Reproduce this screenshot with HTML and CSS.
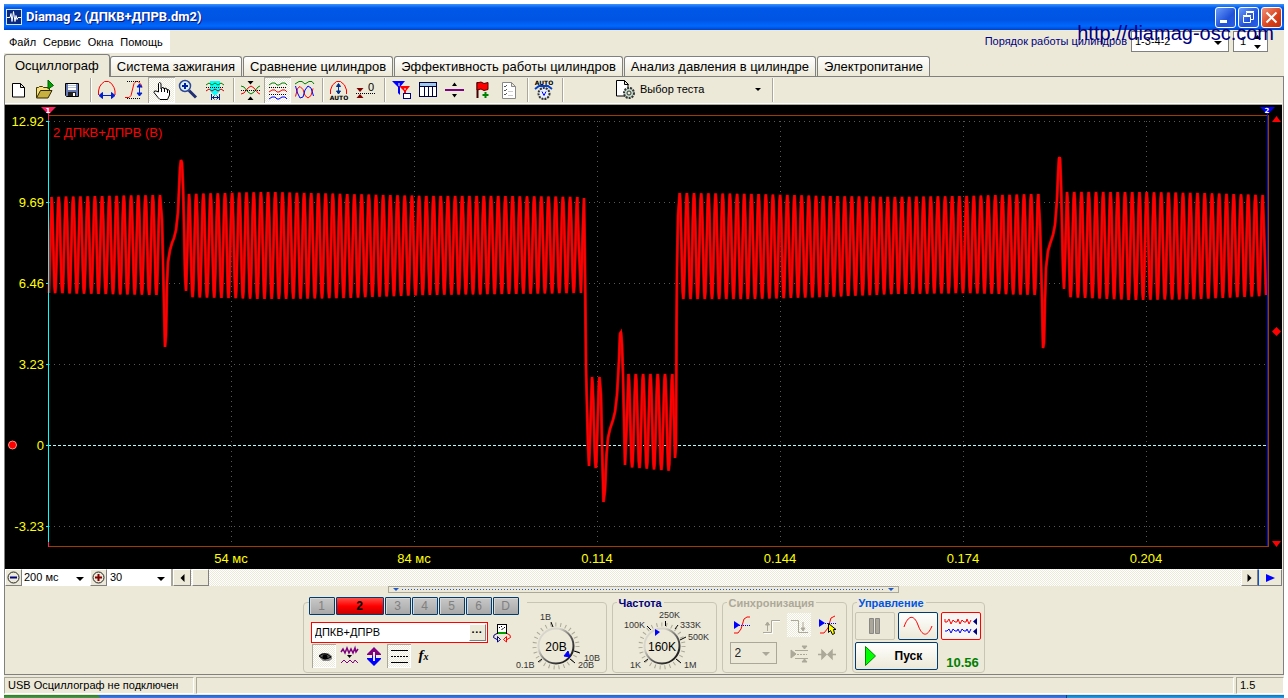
FILE: index.html
```html
<!DOCTYPE html>
<html lang="ru">
<head>
<meta charset="utf-8">
<title>Diamag 2</title>
<link rel="stylesheet" href="styles.css">
</head>
<body>
<div class="window">
  <header class="titlebar">
    <svg class="app-icon" width="16" height="16" viewBox="0 0 16 16"><rect width="16" height="16" fill="#d8e4f8"/><rect x="1" y="1" width="14" height="14" fill="#0a2a80"/><path d="M1 8.500h3l1-4 1 8 1.500-10 1.500 10 1-6 1 4 1-2h3" fill="none" stroke="#fff"/></svg>
    <h1 class="title">Diamag 2 (ДПКВ+ДПРВ.dm2)</h1>
    <div class="win-buttons">
      <button class="win-btn" aria-label="Свернуть"><svg width="19" height="19" viewBox="0 0 19 19"><rect x="4" y="12" width="7" height="3" fill="#fff"/></svg></button>
      <button class="win-btn" aria-label="Восстановить"><svg width="19" height="19" viewBox="0 0 19 19"><path d="M7.500 7V4.500h7v7H12M4.500 8.500h7v6h-7zM4 7.500h8M7 3.500h8" fill="none" stroke="#fff"/></svg></button>
      <button class="win-btn win-close" aria-label="Закрыть"><svg width="19" height="19" viewBox="0 0 19 19"><path d="M4.500 4.500l10 10M14.500 4.500l-10 10" stroke="#fff" stroke-width="2"/></svg></button>
    </div>
  </header>

  <div class="menurow">
    <nav class="menu">
      <a href="#">Файл</a><a href="#">Сервис</a><a href="#">Окна</a><a href="#">Помощь</a>
    </nav>
    <div class="order">
      <label for="order">Порядок работы цилиндров</label>
      <span class="pick pick-order"><select id="order"><option>1-3-4-2</option></select></span>
      <span class="spin"><input type="text" value="1" aria-label="Номер цилиндра"><svg width="8" height="14" viewBox="0 0 8 14"><path d="M0 4h7L3.500 0zM0 10h7l-3.500 4z"/></svg></span>
    </div>
    <span class="watermark">http://diamag-osc.com</span>
  </div>

  <div class="tabs" role="tablist">
    <button class="tab active" role="tab">Осциллограф</button>
    <button class="tab" role="tab">Система зажигания</button>
    <button class="tab" role="tab">Сравнение цилиндров</button>
    <button class="tab" role="tab">Эффективность работы цилиндров</button>
    <button class="tab" role="tab">Анализ давления в цилиндре</button>
    <button class="tab" role="tab">Электропитание</button>
  </div>

  <main class="page">
    <div class="toolbar">
      <button class="tool" aria-label="Новый"><svg viewBox="0 0 27 26"><path d="M7.500 6.500h8l4 4v9.500h-12zM15.500 6.500v4h4" fill="#fff" stroke="#000"/></svg></button>
      <button class="tool" aria-label="Открыть"><svg viewBox="0 0 27 26"><path d="M4.500 20.500v-10h2l1-1h3l1 1h6v3" fill="#f8e080" stroke="#403800"/><path d="M4.500 21l4-7.500h11.500l-4 7.500z" fill="#c8b040" stroke="#302800"/><path d="M16 3v9l5.500-3.500z" fill="#00a000" stroke="#006000"/></svg></button>
      <button class="tool" aria-label="Сохранить"><svg viewBox="0 0 27 26"><path d="M6.500 6.500h13v13h-12l-1-1z" fill="#6878b0" stroke="#000"/><rect x="9" y="7" width="8" height="6" fill="#fff"/><path d="M9 8.500h8M9 10.500h8" stroke="#b8c8e0"/><rect x="9" y="15" width="8" height="4" fill="#202020"/><rect x="14" y="16" width="2" height="3" fill="#fff"/></svg></button>
      <i class="sep"></i>
      <button class="tool" aria-label="Период"><svg viewBox="0 0 27 26"><path d="M4.500 18v-4l1-4 2-3 3-2.500h4l3 2 2.500 4 1 3.500v4" fill="none" stroke="#f00"/><path d="M7 18.500h12M8.500 15.500l-3.500 3 3.500 3zM17.500 15.500l3.500 3-3.500 3z" fill="#0020d0" stroke="#0020d0"/></svg></button>
      <button class="tool" aria-label="Амплитуда"><svg viewBox="0 0 27 26"><path d="M4 20.500h4l2-2 3-12 2-2h2l3 3 1 3" fill="none" stroke="#f00"/><path d="M6 4.500h14M6 21.500h14" stroke="#000" stroke-dasharray="1 1"/><path d="M18.500 7v12M16 10l2.500-3 2.500 3zM16 16l2.500 3 2.500-3z" fill="#0020d0" stroke="#0020d0"/></svg></button>
      <button class="tool pressed" aria-label="Рука"><svg viewBox="0 0 27 26"><path d="M10.500 15V6.500l1-1 1.500 1V12l1-1.500 2 .5v1l1-1 2 1v1l1-.5 1.500 1V18l-2 4.500H12l-2-2-4-5 .5-1.500h1.500z" fill="#fff" stroke="#000"/><path d="M13.500 12v3M16.500 12v3M19.500 13v3" stroke="#000"/></svg></button>
      <button class="tool" aria-label="Масштаб"><svg viewBox="0 0 27 26"><path d="M14 13.500l7 7" stroke="#203070" stroke-width="3"/><circle cx="10" cy="9" r="5.500" fill="#d8f0ff" stroke="#304890" stroke-width="1.500"/><path d="M7 9h6M10 6v6" stroke="#0020a0" stroke-width="2"/></svg></button>
      <button class="tool" aria-label="Выделение"><svg viewBox="0 0 27 26"><path d="M8 4h10v10l-4 4h-2l-4-4z" fill="#00ffff"/><path d="M4 8l3-2 3 2 3-2 3 2 3-2 3 2" fill="none" stroke="#008000"/><path d="M4 10.500h18" stroke="#000" stroke-dasharray="1 1"/><path d="M4 14l3-2 3 2 3-2 3 2 3-2 3 2" fill="none" stroke="#d00000"/><path d="M9.500 17v6M17.500 17v6M10 20.500h7M12.500 18.500l-2 2 2 2M14.500 18.500l2 2-2 2" fill="none" stroke="#002080"/></svg></button>
      <i class="sep"></i>
      <button class="tool" aria-label="Совместить"><svg viewBox="0 0 27 26"><path d="M4 17l3-1 4-5 3-2 3 2 4 5 2 1" fill="none" stroke="#f00"/><path d="M4 9l3 1 4 5 3 2 3-2 4-5 2-1" fill="none" stroke="#008000"/><path d="M4 13.500h19" stroke="#000" stroke-dasharray="1 1"/><path d="M10.500 4h6l-3 3.500zM10.500 23h6l-3-3.500z"/></svg></button>
      <button class="tool pressed" aria-label="Разделить"><svg viewBox="0 0 27 26"><g fill="none"><path d="M5 8l3-2h3l2 2h2l3-2h3l2 2" stroke="#008000"/><path d="M5 15l3-2h3l2 2h2l3-2h3l2 2" stroke="#f00"/><path d="M5 22l3-2h3l2 2h2l3-2h3l2 2" stroke="#00f"/><path d="M5 10.500h18M5 17.500h18" stroke="#000" stroke-dasharray="1 1"/></g></svg></button>
      <button class="tool" aria-label="Наложить"><svg viewBox="0 0 27 26"><g fill="none"><path d="M4 7l4-2.500h3l3 2.500 4-2.500h3l2 2.500" stroke="#008000"/><path d="M4.500 19.500l2-8 2.500-2 3 3 2 6 3 2.500 3-2.500 2-7" stroke="#f00"/><path d="M4.500 9l2 7 2.500 5 3-1 2-7 3-4 3 2 2.500 8" stroke="#00f"/></g></svg></button>
      <i class="sep"></i>
      <button class="tool" aria-label="Авто амплитуда"><svg viewBox="0 0 27 26"><path d="M4.500 17v-4l2-5 4-3.500h4l4 3.500 2 5v4" fill="none" stroke="#f00"/><path d="M12.500 7v9M10.500 9.500l2-3 2 3zM10.500 14l2 3 2-3z" fill="#003090" stroke="#003090"/><text class="micro" x="13" y="23" text-anchor="middle">AUTO</text></svg></button>
      <button class="tool" aria-label="Ноль"><svg viewBox="0 0 27 26"><path d="M3.500 11h7l-3.500 4zM3.500 21h7l-3.500-4z" fill="#800000"/><path d="M3 16.500h19" stroke="#000" stroke-dasharray="1 1"/><text x="15" y="14" class="zero">0</text></svg></button>
      <i class="sep"></i>
      <button class="tool" aria-label="Фильтр"><svg viewBox="0 0 27 26"><path d="M4 4h13l-5 6v8l-2-2v-6z" fill="#00f"/><path d="M11 9h11l-4 5v6l-2-1v-5z" fill="#f00"/><path d="M11 6v3M17 11v2" stroke="#fff"/><rect x="15.500" y="16.500" width="7" height="5" fill="#fff" stroke="#000080"/></svg></button>
      <button class="tool" aria-label="Таблица"><svg viewBox="0 0 27 26"><rect x="4.500" y="5.500" width="17" height="14" fill="#fff" stroke="#000040"/><rect x="5" y="6" width="16" height="3" fill="#a0c8e8"/><path d="M4 9.500h18M9.500 9v11M13.500 9v11M17.500 9v11" stroke="#000040"/></svg></button>
      <button class="tool" aria-label="Маркер"><svg viewBox="0 0 27 26"><rect x="3" y="12" width="19" height="2" fill="#800080"/><path d="M10 9h5l-2.500-3.500zM10 17h5l-2.500 3.500z"/></svg></button>
      <button class="tool" aria-label="Флаг"><svg viewBox="0 0 27 26"><path d="M8.500 5v16" stroke="#400" stroke-width="2"/><path d="M8 6l4-1 3 1.500 4-1v7l-4 1-3-1.500-4 1z" fill="#f00" stroke="#500"/><path d="M16.500 15v6M13.500 18h6" stroke="#008000" stroke-width="2"/></svg></button>
      <button class="tool" aria-label="Список"><svg viewBox="0 0 27 26"><path d="M6.500 5.500h9l4 4v12h-13zM15.500 5.500v4h4" fill="#fff" stroke="#888"/><path d="M8 9l1 1 2-2M8 13l1 1 2-2M8 17l1 1 2-2" fill="none" stroke="#555"/><path d="M12 14.500h5M12 18.500h5" stroke="#ccc"/></svg></button>
      <i class="sep"></i>
      <button class="tool" aria-label="Авто режим"><svg viewBox="0 0 27 26"><text class="micro" x="13" y="8" text-anchor="middle">AUTO</text><path d="M4 12l4-3h9l4 3" fill="none" stroke="#0040d0" stroke-width="2"/><circle cx="13" cy="16.500" r="5.500" fill="#e8f0ff" stroke="#333" stroke-width="2" stroke-dasharray="2 1"/><path d="M11 14.500l2 4 2-4" fill="none" stroke="#00f"/></svg></button>
      <i class="sep"></i>
      <button class="test">
        <svg width="22" height="22" viewBox="0 0 22 22"><path d="M1.500 1.500h8l3.500 3.500v12h-11.500zM9.500 1.500v4h4" fill="#fff" stroke="#000"/><circle cx="14" cy="14" r="5" fill="#c0d8c8" stroke="#333" stroke-width="2" stroke-dasharray="2 1"/><circle cx="14" cy="14" r="2" fill="#ece9d8" stroke="#333"/></svg>
        <span>Выбор теста</span><b class="caret"></b>
      </button>
      <i class="sep"></i>
    </div>

    <svg class="plot" viewBox="5 105 1277 464" role="img" aria-label="Осциллограмма ДПКВ+ДПРВ">
      <rect x="5" y="105" width="1277" height="464"/>
      <g class="grid" id="grid"></g>
      <g class="frame"><path d="M48 115.500H1269M48 546.500H1269M1268.500 115V547"/></g>
      <path class="zero-line" d="M48 445.500H1266"/>
      <path class="trace-edge" id="trace-edge"/>
      <path class="trace" id="trace"/>
      <path class="cursor-a" d="M48.500 119V542M46 121.500h3M46 202.500h3M46 283.500h3M46 364.500h3M46 445.500h3M46 526.500h3"/>
      <path d="M48.500 108V121M48.500 542v5" stroke="#ff2060"/>
      <path d="M1267.500 108V546" stroke="#1010d0"/>
      <path d="M41 107h15l-7.500 7.500z" fill="#ff2060"/>
      <path d="M1260 107h15l-7.500 7.500z" fill="#0000ff"/>
      <text class="flagno" x="48" y="113" text-anchor="middle">1</text>
      <text class="flagno" x="1267" y="113" text-anchor="middle">2</text>
      <path d="M1272 122h9l-4.500-6zM1272 541h9l-4.500 6zM1276.500 327l4.500 4.500-4.500 4.500-4.500-4.500z" fill="#f00"/>
      <circle cx="12.500" cy="445" r="4" fill="#f00" stroke="#ff9080"/>
      <g class="axis" text-anchor="end">
        <text x="44" y="126">12.92</text><text x="44" y="207">9.69</text><text x="44" y="288">6.46</text><text x="44" y="369">3.23</text><text x="44" y="450">0</text><text x="44" y="531">-3.23</text>
      </g>
      <g class="axis" text-anchor="middle">
        <text x="231" y="563">54 мс</text><text x="414" y="563">84 мс</text><text x="597" y="563">0.114</text><text x="780" y="563">0.144</text><text x="963" y="563">0.174</text><text x="1146" y="563">0.204</text>
      </g>
      <text class="channel-name" x="53" y="137">2 ДПКВ+ДПРВ (В)</text>
    </svg>

    <div class="scrollrow">
      <button class="raised w16" aria-label="Уменьшить"><svg width="13" height="13" viewBox="0 0 13 13"><circle cx="6.500" cy="6.500" r="5.500" fill="none" stroke="#222"/><path d="M3 6.500h7" stroke="#000080" stroke-width="2"/></svg></button>
      <span class="pick pick-time"><select aria-label="Время"><option>200 мс</option></select></span>
      <button class="raised w16" aria-label="Увеличить"><svg width="13" height="13" viewBox="0 0 13 13"><circle cx="6.500" cy="6.500" r="5.500" fill="none" stroke="#222"/><path d="M3 6.500h7M6.500 3v7" stroke="#800000" stroke-width="2"/></svg></button>
      <span class="pick pick-scale"><select aria-label="Масштаб"><option>30</option></select></span>
      <button class="raised w18" aria-label="Влево"><svg width="5" height="8" viewBox="0 0 5 8"><path d="M4.500 0v8L.5 4z"/></svg></button>
      <div class="track"><span class="raised thumb"></span></div>
      <button class="raised w16" aria-label="Вправо"><svg width="5" height="8" viewBox="0 0 5 8"><path d="M.5 0v8l4-4z"/></svg></button>
      <button class="raised w24" aria-label="В конец"><svg width="9" height="8" viewBox="0 0 9 8"><path d="M0 0v8l9-4z" fill="#00f"/></svg></button>
    </div>

    <div class="splitter"><i class="tri"></i><i class="dots"></i><i class="tri"></i></div>

    <div class="groups">
      <section class="group channel">
        <div class="chan-tabs">
          <button>1</button><button class="on">2</button><button>3</button><button>4</button><button>5</button><button>6</button><button>D</button>
        </div>
        <div class="chan-body">
          <div class="chan-left">
            <div class="line">
              <div class="sensor"><input type="text" value="ДПКВ+ДПРВ" aria-label="Датчик"><button class="raised more" aria-label="Выбрать датчик">···</button></div>
              <svg width="20" height="20" viewBox="0 0 20 20"><rect x="5.500" y="1.500" width="9" height="9" fill="#fff" stroke="#000"/><rect x="6" y="9" width="8" height="2" fill="#00a000"/><path d="M7 4.500h1M9.500 3v1M12 4.500h1M9.500 7l2-2" stroke="#000"/><path d="M5 10.500q-4 1-3.500 4l3.500 2M5.500 13.500v5.500l3-2.500z" fill="none" stroke="#000080"/><path d="M15 10.500q4 1 3.500 4l-3.500 2M14.500 13.500v5.500l-3-2.500z" fill="none" stroke="#f00"/></svg>
            </div>
            <div class="line icons">
              <button class="mini pressed" aria-label="Показать"><svg viewBox="0 0 24 24"><path d="M7 11l3-2h6l4 3v3l-3 2h-6l-3-3z" fill="#888"/><path d="M7 12q6-5 12 1-6 4-12-1z" fill="#555" stroke="#000"/><circle cx="13" cy="13" r="2.500"/></svg></button>
              <button class="mini" aria-label="Сгладить"><svg viewBox="0 0 24 24"><path d="M4 8l2-3 2 4 2-5 2 5 2-4 2 4 2-5 1 4 2-3" fill="none" stroke="#800080" stroke-width="1.500"/><path d="M10 11h5l-2.500 3z"/><path d="M4 19l3-3 3 3 3-3 3 3 2-3 3 3" fill="none" stroke="#800080"/></svg></button>
              <button class="mini" aria-label="Сдвиг"><svg viewBox="0 0 24 24"><path d="M5 10l7-7 7 7v1h-5v2h-4v-2H5z" fill="#800080"/><path d="M5 14h5v-2h4v2h5v1l-7 7-7-7z" fill="#00f"/><rect x="11" y="8" width="2" height="9" fill="#ece9d8"/></svg></button>
              <button class="mini pressed" aria-label="Линии"><svg viewBox="0 0 24 24"><path d="M4 6.500h17M4 18.500h17" stroke="#000"/><path d="M4 12.500h17" stroke="#000" stroke-dasharray="2 1"/></svg></button>
              <button class="mini fx" aria-label="Функция"><i>f</i><small>x</small></button>
            </div>
          </div>
          <svg class="dial" width="94" height="56" viewBox="513 615 94 56">
            <defs><linearGradient id="ring" x1="0" y1="0" x2="1" y2="1"><stop offset=".3" stop-color="#d8d6cc"/><stop offset=".6" stop-color="#555"/><stop offset="1" stop-color="#000"/></linearGradient></defs>
            <circle class="ticks" cx="557" cy="646" r="21.500"/>
            <circle class="knob" cx="557" cy="646" r="17.500"/>
            <path d="M554 627l-2-5M543 659l-4 3M571 659l5 4M575 651l6 2" stroke="#000"/>
            <path d="M565 656l4-5 2 6z" fill="#00f" stroke="#00f"/>
            <text class="val" x="557" y="651" text-anchor="middle">20В</text>
            <g class="marks"><text x="541" y="620">1В</text><text x="517" y="668">0.1В</text><text x="585" y="661">10В</text><text x="579" y="668">20В</text></g>
          </svg>
        </div>
      </section>

      <section class="group freq">
        <h2>Частота</h2>
        <svg class="dial" width="102" height="62" viewBox="612 609 102 62">
          <circle class="ticks" cx="661" cy="646" r="21.500"/>
          <circle class="knob" cx="661" cy="646" r="17.500"/>
          <path d="M664.500 626v-5M650 630l-4-4M674 629l3-4M679 640l6-3M647 659l-4 3M675 659l5 4" stroke="#000"/>
          <path d="M654 629v7l5-4z" fill="#00f"/>
          <text class="val" x="661" y="651" text-anchor="middle">160K</text>
          <g class="marks"><text x="658" y="618">250K</text><text x="623" y="628">100K</text><text x="679" y="628">333K</text><text x="687" y="640">500K</text><text x="683" y="668">1M</text><text x="629" y="668">1K</text></g>
        </svg>
      </section>

      <section class="group sync">
        <h2>Синхронизация</h2>
        <div class="sync-grid">
          <button class="mini" aria-label="Уровень"><svg viewBox="0 0 24 24"><path d="M5 20h4l3-4 3-10 3-2h3" fill="none" stroke="#f00"/><path d="M8 12.500h14" stroke="#00f" stroke-dasharray="1 1"/><path d="M5 8v8l6-4z" fill="#00f"/></svg></button>
          <button class="mini" aria-label="Фронт"><svg viewBox="0 0 24 24"><path d="M6 20.500h8.500v-12H22" fill="none" stroke="#fff"/><path d="M5 19.500h8.500v-12H22" fill="none" stroke="#aca899"/><path d="M9.500 18v-7M7.500 12l2-3 2 3z" fill="#aca899" stroke="#aca899"/></svg></button>
          <button class="mini checker" aria-label="Спад"><svg viewBox="0 0 24 24"><path d="M4 7.500h7.500v12H21" fill="none" stroke="#aca899"/><path d="M16 9v7M14 15l2 3 2-3z" fill="#aca899" stroke="#aca899"/></svg></button>
          <button class="mini" aria-label="Захват"><svg viewBox="0 0 24 24"><path d="M4 20h4l4-5 3-10 4-2" fill="none" stroke="#f00"/><path d="M7 10.500h14" stroke="#00f" stroke-dasharray="1 1"/><path d="M3 6v8l6-4z" fill="#00f"/><path d="M12.500 10.500v9l2-2 2 4 2-1-1-4h2.500z" fill="#ff0" stroke="#000"/></svg></button>
        </div>
        <div class="sync-grid low">
          <span class="pick pick-sync"><select aria-label="Канал синхронизации" disabled><option>2</option></select></span>
          <button class="mini" aria-label="Окно"><svg viewBox="0 0 24 24"><g fill="#aca899" stroke="#aca899"><path d="M4 8v8l5-4zM15 4h5l-2.500 3zM15 20h5l-2.500-3z"/><path d="M8 8.500h13M8 16.500h13" fill="none"/><path d="M10 12.500h10" stroke-dasharray="2 1"/></g></svg></button>
          <button class="mini" aria-label="Центр"><svg viewBox="0 0 24 24"><path d="M3 12.500h5M16 12.500h5M7 8.500l4 4-4 4zM17 8.500l-4 4 4 4z" fill="#aca899" stroke="#aca899" stroke-width="1.500"/></svg></button>
        </div>
      </section>

      <section class="group control">
        <h2>Управление</h2>
        <div class="control-grid">
          <button class="big off" aria-label="Пауза"><svg width="12" height="16" viewBox="0 0 12 16"><path d="M.5.5h4v15h-4zM6.500.5h4v15h-4z" fill="#aca899" stroke="#888"/></svg></button>
          <button class="big" aria-label="Одиночный"><svg width="30" height="20" viewBox="0 0 30 20"><path d="M1 11C5-1 11-2 15 9s9 13 14 1" fill="none" stroke="#f00"/></svg></button>
          <button class="big chosen" aria-label="Непрерывно"><svg width="34" height="20" viewBox="0 0 34 20"><path d="M1 3v3h2l2-3 2 5 2-4 2 2h2l1-3 2 5 2-4 2 2h2l1-3 2 5 2-4" fill="none" stroke="#f00"/><path d="M1 15h2l2-2 2 4 2-4 2 2h2l1-2 2 4 2-4 2 2h2l1-2 2 4 2-4" fill="none" stroke="#00f"/><path d="M33 2v7l-4-3.500zM33 12v7l-4-3.500z" fill="#000080"/></svg></button>
          <button class="big start"><svg width="11" height="20" viewBox="0 0 11 20"><path d="M.5.5v19l10-9.500z" fill="#0f0" stroke="#080"/></svg><span>Пуск</span></button>
          <output class="reading">10.56</output>
        </div>
      </section>
    </div>
  </main>

  <footer class="status">
    <span class="cell first">USB Осциллограф не подключен</span><span class="cell mid"></span><span class="cell last">1.5</span>
  </footer>
  <div class="taskbar"><i class="start-edge"></i><i class="tray-edge"></i></div>
</div>
<script src="plot.js"></script>
</body>
</html>
```
FILE: styles.css
```css
* { box-sizing: border-box; }
body { margin: 0; padding: 4px 4px 0; background: #fff; font: 11px/13px "Liberation Sans", Arial, sans-serif; color: #000; }
button, input, select { font: inherit; color: inherit; margin: 0; padding: 0; border: 0; background: none; border-radius: 0; min-width: 0; }
h1, h2 { margin: 0; }
svg { display: block; }
select { appearance: none; width: 100%; height: 100%; opacity: 1; }
.window { background: #ece9d8; }

.titlebar { display: flex; align-items: center; height: 26px; padding: 0 2px; background: linear-gradient(#3a94ff 0, #0058e8 4px, #0054e3 16px, #0068ff 22px, #0042c8 26px); }
.title { flex: 1; margin-left: 4px; font: bold 13px/18px Roboto, sans-serif; color: #fff; text-shadow: 1px 1px #0a1883; }
.win-buttons { display: flex; gap: 2px; }
.win-btn { width: 21px; height: 21px; border: 1px solid #fff; border-radius: 3px; background: linear-gradient(135deg, #6a9cf8, #1f50d8 60%, #2a60e8); }
.win-close { background: linear-gradient(135deg, #f09078, #d84018 60%, #c03010); }

.menurow { position: relative; display: flex; justify-content: space-between; height: 23px; }
.menu { display: flex; gap: 7px; padding: 6px 7px 0 5px; background: #fff; }
.menu a { color: #000; text-decoration: none; }
.order { display: flex; align-items: center; gap: 4px; padding-right: 16px; }
.order label { color: #000080; }
.pick { position: relative; display: inline-block; background: #fff; }
.pick select { padding-left: 3px; }
.pick::after { content: ""; position: absolute; right: 6px; top: 50%; margin-top: -1px; border: 4px solid transparent; border-top-color: #000; border-bottom: 0; pointer-events: none; }
.pick-order { width: 98px; height: 21px; border: 1px solid #808080; }
.spin { display: flex; align-items: center; width: 35px; height: 21px; border: 1px solid #808080; background: #fff; }
.spin input { width: 20px; padding-left: 6px; }
.watermark { position: absolute; right: 10px; top: -8px; font-size: 20px; line-height: 22px; color: #000080; pointer-events: none; }

.tabs { display: flex; align-items: flex-end; height: 24px; border-bottom: 1px solid #808080; }
.tab { height: 20px; margin-right: 1px; padding: 0 6px; border: 1px solid #808080; border-bottom: 0; border-radius: 3px 3px 0 0; background: linear-gradient(#fff, #ece9d8); font-size: 13px; line-height: 18px; white-space: nowrap; }
.tab.active { height: 23px; margin: 0 0 -1px; padding: 0 10px; background: #ece9d8; z-index: 1; }

.page { border: solid #808080; border-width: 0 1px 1px; padding-right: 1px; }
.toolbar { display: flex; height: 28px; padding-bottom: 2px; border-bottom: 1px solid #aca899; box-shadow: inset 0 -1px #fff; }
.tool { width: 27px; height: 26px; border: 0; }
.tool svg { width: 27px; height: 26px; }
.pressed { background: repeating-conic-gradient(#fff 0 25%, #ece9d8 0 50%) 0 0 / 2px 2px; box-shadow: inset 1px 1px #aca899, inset -1px -1px #fff; }
.sep { width: 8px; height: 24px; margin-top: 1px; background: linear-gradient(90deg, transparent 4px, #aca899 4px 5px, #fff 5px 6px, transparent 6px); }
.micro { font: bold 6px "DejaVu Sans", sans-serif; }
.zero { font: 11px "Liberation Sans", sans-serif; }
.test { display: flex; align-items: center; gap: 3px; width: 202px; padding: 0 4px 0 49px; text-align: left; }
.test span { flex: 1; }
.caret { margin-right: 3px; border: 3px solid transparent; border-top-color: #000; border-bottom: 0; }

.plot { width: 100%; height: auto; }
.plot .grid { stroke: #585858; stroke-dasharray: 1 4; }
.plot .frame { fill: none; stroke: #a03c00; }
.zero-line { stroke: #b0ffff; stroke-dasharray: 3 2; }
.trace { fill: none; stroke: #f00; stroke-width: 2; }
.trace-edge { fill: none; stroke: #b00000; stroke-width: 3; stroke-linejoin: bevel; }
.cursor-a { fill: none; stroke: #0ff; }
.axis { fill: #ff0; font: 13px "Liberation Sans", sans-serif; }
.channel-name { fill: #f00; font: 13px "Liberation Sans", sans-serif; }
.flagno { fill: #fff; font: bold 7px "DejaVu Sans", sans-serif; }

.scrollrow { display: flex; height: 17px; }
.raised { display: flex; align-items: center; justify-content: center; background: #ece9d8; border: 1px solid; border-color: #fff #808080 #808080 #fff; flex: none; }
.w16 { width: 17px; }
.w18 { width: 18px; }
.w24 { width: 24px; border-left: 1px solid #0054e3; }
.pick-time { width: 68px; }
.pick-scale { width: 66px; border-right: 2px solid #aca899; }
.pick-time select { padding-left: 2px; }
.track { flex: 1; display: flex; padding-left: 1px; background: repeating-conic-gradient(#fff 0 25%, #ece9d8 0 50%) 0 0 / 2px 2px; }
.thumb { width: 17px; }

.splitter { display: flex; align-items: center; gap: 3px; width: 40%; height: 7px; margin: 0 auto; padding: 0 4px; border: 1px solid #aca899; }
.tri { border: 3px solid transparent; border-top-color: #2058c8; border-bottom: 0; }
.dots { flex: 1; height: 1px; background: repeating-linear-gradient(90deg, #2058c8 0 1px, transparent 1px 3px); }

.groups { display: flex; justify-content: center; gap: 5px; padding: 9px 0 1px; }
.group { height: 71px; border: 1px solid #c8c5b5; border-radius: 4px; }
.group h2 { width: max-content; margin: -6px 0 0 4px; padding: 0 2px; background: #ece9d8; font: bold 11px/12px "Liberation Sans", sans-serif; }
.channel { width: 304px; }
.chan-tabs { display: flex; gap: 1px; width: 218px; margin: -6px 0 0 5px; background: #ece9d8; }
.chan-tabs button { width: 26px; height: 18px; border: 1px solid #003c74; border-radius: 1px; background: linear-gradient(#c8c8c8, #a8a8a8); color: #808080; font-size: 12px; box-shadow: inset 1px 1px #d8d8d8; }
.chan-tabs .on { width: 48px; background: linear-gradient(#ff5048, #f00 50%, #c80000); color: #000; font-weight: bold; box-shadow: none; }
.chan-body { display: flex; justify-content: space-between; }
.chan-left { padding: 7px 0 0 7px; }
.line { display: flex; align-items: center; gap: 4px; }
.icons { gap: 1px; margin-top: 1px; padding-left: 1px; }
.sensor { display: flex; width: 177px; height: 21px; padding: 1px; border: 1px solid #f00; background: #fff; }
.sensor input { flex: 1; padding-left: 2px; }
.more { width: 17px; font-weight: bold; }
.mini { width: 24px; height: 24px; }
.mini svg { width: 24px; height: 24px; }
.fx { font: bold 15px/20px "Liberation Serif", serif; }
.fx small { font-size: 10px; font-style: italic; }
.dial { overflow: visible; }
.ticks { fill: none; stroke: #aca899; stroke-width: 4; stroke-dasharray: 1 4; }
.knob { fill: #ece9d8; stroke: url(#ring); stroke-width: 2; }
.val { font-size: 12px; }
.marks { font-size: 9px; fill: #333; }
.freq { width: 105px; }
.freq h2 { color: #000080; }
.sync { width: 125px; }
.sync h2 { color: #aca899; }
.sync-grid { display: flex; gap: 5px; padding: 4px 6px 0; }
.sync-grid.low { padding-top: 5px; padding-left: 7px; gap: 4px; }
.checker { background: repeating-conic-gradient(#fff 0 25%, #ece9d8 0 50%) 0 0 / 2px 2px; }
.pick-sync { width: 47px; height: 22px; margin-right: 6px; border: 1px solid #aca899; background: #ece9d8; font-size: 12px; }
.pick-sync::after { border-top-color: #aca899; }
.pick-sync select { padding-left: 4px; color: #222; opacity: 1; }
.control { width: 133px; }
.control h2 { color: #0054e3; }
.control-grid { display: grid; grid-template-columns: repeat(3, 40px); gap: 2px 3px; padding: 3px 2px; }
.big { display: flex; align-items: center; justify-content: center; height: 28px; border: 1px solid #003c74; border-radius: 2px; background: linear-gradient(#fff, #ece9d8); }
.off { border-color: #c8c5b5; background: #ece9d8; }
.chosen { border-color: #f00; background: #f8f6f4; }
.start { grid-column: span 2; justify-content: flex-start; gap: 19px; padding-left: 9px; font-size: 12px; font-weight: bold; }
.reading { align-self: end; justify-self: center; margin-right: -4px; color: #008000; font-size: 13px; font-weight: bold; line-height: 15px; }

.status { display: flex; gap: 2px; height: 20px; padding: 2px 0 1px; background: #ece9d8; line-height: 15px; }
.cell { border: 1px solid; border-color: #aca899 #fff #fff #aca899; padding-left: 3px; }
.first { width: 190px; }
.mid { flex: 1; }
.last { width: 48px; }
.taskbar { display: flex; justify-content: space-between; height: 4px; background: linear-gradient(#2060d8, #3a88f0); }
.start-edge { width: 96px; background: linear-gradient(#2e7a2e, #50a850); border-radius: 0 6px 0 0; }
.tray-edge { width: 218px; border-left: 1px solid #083c90; background: linear-gradient(#0c70c8, #18b8f8); }
```
FILE: plot.js
```js
// Grid lines: one every 81 units vertically, 183 horizontally.
var grid = "";
for (var gy = 121; gy <= 526; gy += 81) {
  if (gy !== 445) grid += "<path d='M49 " + (gy + 0.5) + "H1266'/>";
}
for (var gx = 231; gx <= 1146; gx += 183) {
  grid += "<path d='M" + (gx + 0.5) + " 121V546'/>";
}
document.getElementById("grid").innerHTML = grid;

var points = [[49, 293]];

function lerp(stops, t) {
  var s = t * (stops.length - 1), i = Math.min(Math.floor(s), stops.length - 2);
  return stops[i] + (stops[i + 1] - stops[i]) * (s - i);
}

// Sine burst from the first peak to the last one, between two envelopes.
function burst(x0, x1, cycles, tops, lows) {
  var n = cycles * 12;
  for (var i = 0; i <= n; i++) {
    var t = i / n, top = lerp(tops, t), low = lerp(lows, t);
    points.push([x0 + (x1 - x0) * t, (top + low) / 2 - (low - top) / 2 * Math.cos(t * cycles * 2 * Math.PI)]);
  }
}

function add(list) { points = points.concat(list); }

burst(51.5, 160, 15, [197, 195], [293, 295]);
add([[162, 220], [163, 262], [164, 305], [165, 347], [166, 335], [167, 283], [168, 262], [170, 250], [172, 243], [174, 238], [176, 230], [178, 212], [179, 190], [180, 168], [181, 160], [182, 163], [183, 185], [184, 225], [185, 275], [186, 291], [187, 262]]);
burst(189, 577.3, 54, [194, 192, 194, 196, 196, 197], [297, 299, 298, 295, 294, 293]);
add([[579, 250], [581, 293], [583, 222], [584, 198], [585, 267], [586, 367], [587, 407], [588, 445], [589, 466], [590, 440]]);
burst(592, 599.5, 1, [377, 377], [468, 468]);
add([[601, 395], [602, 445], [603.5, 502], [605, 490], [606.5, 455], [608, 438], [610, 429], [613, 420], [615, 412], [617, 395], [619, 360], [620, 334], [621, 332], [622, 345], [623, 375], [624, 420], [625, 465], [626.5, 430]]);
burst(628.5, 672.3, 6, [374, 374], [467, 471]);
add([[674, 420], [675, 458], [676, 445], [676.5, 328], [677, 270], [678, 216]]);
burst(679.7, 1038.3, 50, [193, 194, 196, 197, 196, 194], [299, 299, 297, 294, 293, 295]);
add([[1040, 225], [1041, 260], [1042, 300], [1043, 348], [1044, 343], [1045, 300], [1046, 268], [1048, 251], [1050, 244], [1053, 235], [1055, 225], [1057, 200], [1058, 175], [1059, 158], [1060, 158], [1061, 182], [1062, 225], [1063, 270], [1064, 289], [1065, 262]]);
burst(1067, 1262.7, 27, [192, 192, 193, 195], [297, 300, 299, 296]);
add([[1264.5, 245], [1266, 295]]);

// A darker, wider stroke lies under the bright one.
var path = "M" + points.map(function (p) {
  return p[0].toFixed(1) + " " + p[1].toFixed(1);
}).join("L");
document.getElementById("trace-edge").setAttribute("d", path);
document.getElementById("trace").setAttribute("d", path);
```
